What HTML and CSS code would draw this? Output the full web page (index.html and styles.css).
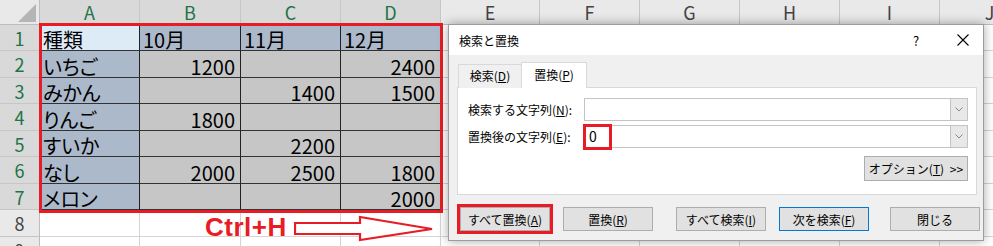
FILE: index.html
```html
<!DOCTYPE html>
<html lang="ja">
<head>
    <meta charset="UTF-8">
    <meta name="viewport" content="width=device-width, initial-scale=1.0">
    <title>検索と置換</title>
    <link rel="stylesheet" href="styles.css">
</head>
<body>

    <!-- Worksheet -->
    <div class="sheet">
        <div class="corner"><svg width="40" height="25"><polygon points="18,22 36,22 36,4" fill="#b5b5b5"/></svg></div>
        <div class="col-head on">A</div><div class="col-head on">B</div><div class="col-head on">C</div><div class="col-head on">D</div>
        <div class="col-head">E</div><div class="col-head">F</div><div class="col-head">G</div><div class="col-head">H</div><div class="col-head">I</div><div class="col-head">J</div>

        <div class="row-head on">1</div>
        <div class="cell active">種類</div><div class="cell key">10月</div><div class="cell key">11月</div><div class="cell key">12月</div>
        <div></div><div></div><div></div><div></div><div></div><div></div>

        <div class="row-head on">2</div>
        <div class="cell key">いちご</div><div class="cell num">1200</div><div class="cell"></div><div class="cell num">2400</div>
        <div></div><div></div><div></div><div></div><div></div><div></div>

        <div class="row-head on">3</div>
        <div class="cell key">みかん</div><div class="cell"></div><div class="cell num">1400</div><div class="cell num">1500</div>
        <div></div><div></div><div></div><div></div><div></div><div></div>

        <div class="row-head on">4</div>
        <div class="cell key">りんご</div><div class="cell num">1800</div><div class="cell"></div><div class="cell"></div>
        <div></div><div></div><div></div><div></div><div></div><div></div>

        <div class="row-head on">5</div>
        <div class="cell key">すいか</div><div class="cell"></div><div class="cell num">2200</div><div class="cell"></div>
        <div></div><div></div><div></div><div></div><div></div><div></div>

        <div class="row-head on">6</div>
        <div class="cell key">なし</div><div class="cell num">2000</div><div class="cell num">2500</div><div class="cell num">1800</div>
        <div></div><div></div><div></div><div></div><div></div><div></div>

        <div class="row-head on">7</div>
        <div class="cell key">メロン</div><div class="cell"></div><div class="cell"></div><div class="cell num">2000</div>
        <div></div><div></div><div></div><div></div><div></div><div></div>

        <div class="row-head">8</div>
        <div></div><div></div><div></div><div></div>
        <div></div><div></div><div></div><div></div><div></div><div></div>

        <div class="row-head">9</div>
        <div></div><div></div><div></div><div></div>
        <div></div><div></div><div></div><div></div><div></div><div></div>
    </div>

    <!-- Annotations over the sheet -->
    <div class="range-mark"></div>
    <div class="shortcut">Ctrl+H</div>
    <svg class="arrow" width="142" height="28" viewBox="0 0 142 28">
        <polygon points="1,8 66,8 66,2 138,14 66,25 66,19 1,19" fill="#fff" stroke="#e81c24" stroke-width="2.2"/>
    </svg>

    <!-- Find and Replace dialog -->
    <div class="dialog">
        <div class="titlebar">
            <span class="title">検索と置換</span>
            <span class="help">?</span>
            <span class="close"><svg width="12" height="12"><path d="M0.5 0.5 L11.5 11.5 M11.5 0.5 L0.5 11.5" stroke="#000" stroke-width="1.1"/></svg></span>
        </div>

        <div class="tabs">
            <div class="tab">検索(<u>D</u>)</div>
            <div class="tab current">置換(<u>P</u>)</div>
        </div>

        <div class="panel">
            <div class="field">
                <label>検索する文字列(<u>N</u>):</label>
                <div class="combo">
                    <span class="value"></span>
                    <span class="drop"><svg width="8" height="5"><polyline points="0.5,0.5 4,4 7.5,0.5" fill="none" stroke="#888"/></svg></span>
                </div>
            </div>
            <div class="field">
                <label>置換後の文字列(<u>E</u>):</label>
                <div class="combo">
                    <span class="value"><span class="mark">0</span></span>
                    <span class="drop"><svg width="8" height="5"><polyline points="0.5,0.5 4,4 7.5,0.5" fill="none" stroke="#888"/></svg></span>
                </div>
            </div>
            <div class="options">
                <button class="btn wide">オプション(<u>T</u>) &gt;&gt;</button>
            </div>
        </div>

        <div class="actions">
            <button class="btn marked">すべて置換(<u>A</u>)</button>
            <button class="btn">置換(<u>R</u>)</button>
            <button class="btn find-all">すべて検索(<u>I</u>)</button>
            <button class="btn default">次を検索(<u>F</u>)</button>
            <button class="btn close-btn">閉じる</button>
        </div>
    </div>

</body>
</html>
```

FILE: styles.css
```css
* {
    box-sizing: border-box;
}

body {
    margin: 0;
    width: 993px;
    height: 246px;
    overflow: hidden;
    position: relative;
    background-color: #fff;
    font-family: "Noto Sans CJK JP", "Noto Sans", sans-serif;
    color: #000;
}

/* worksheet */
.sheet {
    display: grid;
    grid-template-columns: 40px 100px 101px 100px 100px 99px 100px 100px 100px 100px 100px;
    grid-template-rows: 25px 26px 27px 26px 27px 26px 27px 26px 27px 26px;
    width: 1040px;
}

.sheet > div {
    border-right: 1px solid #d4d4d4;
    border-bottom: 1px solid #d4d4d4;
}

.sheet .corner {
    background-color: #e9e9e9;
    border-right-color: #bdbdbd;
    border-bottom-color: #bdbdbd;
}

.corner svg {
    display: block;
}

.sheet .col-head {
    display: flex;
    align-items: center;
    justify-content: center;
    background-color: #e9e9e9;
    border-right-color: #c6c6c6;
    border-bottom-color: #bdbdbd;
    font-size: 18px;
    line-height: 20px;
    color: #444;
}

.sheet .row-head {
    display: flex;
    align-items: center;
    justify-content: center;
    background-color: #e9e9e9;
    border-right-color: #bdbdbd;
    border-bottom-color: #c6c6c6;
    font-size: 18px;
    line-height: 20px;
    color: #444;
}

.sheet .col-head.on,
.sheet .row-head.on {
    background-color: #d9d9d9;
    color: #217346;
}

.sheet .cell {
    display: flex;
    align-items: flex-end;
    padding: 0 5px 0 3px;
    font-size: 20px;
    line-height: 21px;
    font-feature-settings: "palt";
    background-color: #c6c6c6;
    border-right-color: #222;
    border-bottom-color: #333;
}

.sheet .cell.key {
    background-color: #acb9ca;
}

.sheet .cell.active {
    background-color: #ddebf7;
}

.sheet .cell.num {
    justify-content: flex-end;
}

/* annotations */
.range-mark {
    position: absolute;
    left: 39px;
    top: 23px;
    width: 404px;
    height: 190px;
    border: 3px solid #e81c24;
}

.shortcut {
    position: absolute;
    left: 205px;
    top: 213px;
    font-family: "Liberation Sans", Arial, sans-serif;
    font-weight: bold;
    font-size: 26px;
    line-height: 28px;
    letter-spacing: 0.5px;
    color: #e81c24;
}

.arrow {
    position: absolute;
    left: 294px;
    top: 215px;
}

/* dialog */
.dialog {
    position: absolute;
    left: 448px;
    top: 24px;
    width: 536px;
    height: 217px;
    background-color: #f0f0f0;
    border: 1px solid #9c9c9c;
    box-shadow: 0 0 10px rgba(0, 0, 0, 0.35);
    font-size: 12px;
}

.titlebar {
    display: flex;
    align-items: center;
    height: 30px;
    padding-left: 10px;
    background-color: #fff;
}

.titlebar .title {
    flex: 1;
}

.titlebar .help {
    width: 40px;
    margin-right: 7px;
    text-align: center;
    font-size: 13px;
}

.titlebar .close {
    display: flex;
    justify-content: center;
    width: 40px;
}

.tabs {
    display: flex;
    align-items: flex-end;
    height: 26px;
    margin: 7px 0 0 9px;
}

.tab {
    width: 64px;
    height: 24px;
    line-height: 22px;
    text-align: center;
    background-color: #f0f0f0;
    border: 1px solid #d9d9d9;
    border-bottom: none;
}

.tab.current {
    position: relative;
    z-index: 1;
    width: 66px;
    height: 26px;
    line-height: 24px;
    margin-left: -1px;
    background-color: #fff;
}

.panel {
    width: 520px;
    height: 108px;
    margin: -1px 0 0 8px;
    padding: 10px 8px 0 10px;
    background-color: #fff;
    border: 1px solid #d9d9d9;
}

.field {
    display: flex;
    align-items: center;
    height: 23px;
    margin-bottom: 4px;
}

.field label {
    width: 116px;
}

.combo {
    position: relative;
    display: flex;
    width: 384px;
    height: 23px;
    border: 1px solid #c4c4c4;
    background-color: #fff;
}

.combo .value {
    flex: 1;
}

.combo .drop {
    display: flex;
    align-items: center;
    justify-content: center;
    width: 17px;
    background-color: #e8e8e8;
    border-left: 1px solid #c4c4c4;
}

.combo .mark {
    position: absolute;
    left: -2px;
    top: -2px;
    width: 29px;
    height: 26px;
    padding-left: 3px;
    border: 3px solid #e81c24;
    font-size: 14px;
    line-height: 19px;
}

.options {
    display: flex;
    justify-content: flex-end;
    margin-top: 8px;
}

.btn {
    width: 90px;
    height: 24px;
    padding: 0;
    font-family: inherit;
    font-size: 12px;
    color: #000;
    background-color: #e1e1e1;
    border: 1px solid #adadad;
}

.btn.wide {
    width: 104px;
    height: 25px;
    word-spacing: 3px;
}

.actions {
    display: flex;
    gap: 13px;
    margin: 12px 0 0 11px;
}

.btn.marked {
    outline: 3px solid #e81c24;
}

.btn.find-all {
    margin-left: 10px;
}

.btn.default {
    border-color: #0078d7;
}

.btn.close-btn {
    margin-left: 8px;
}
```
